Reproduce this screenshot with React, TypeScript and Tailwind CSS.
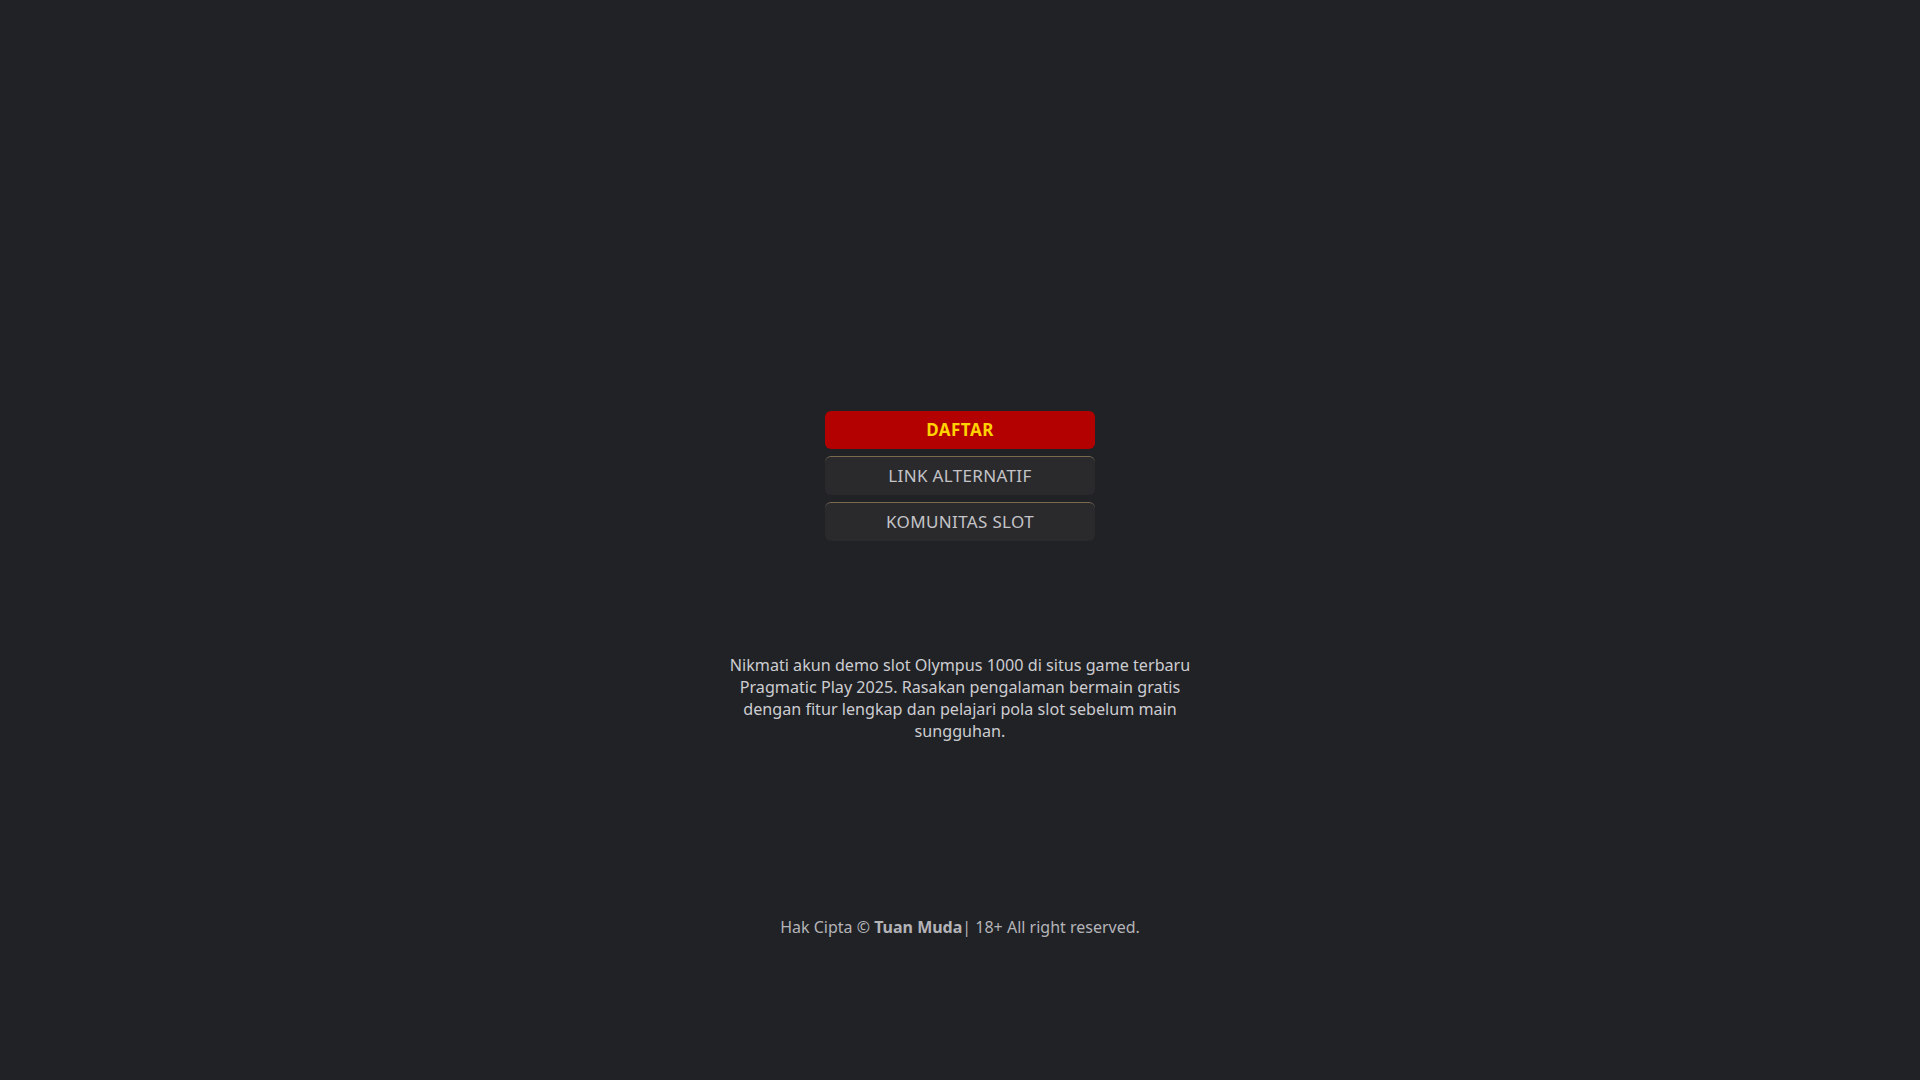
export default function App() {
  return (
    <div
      className="min-h-screen bg-[#212226] flex flex-col items-center pt-[411px]"
      style={{ fontFamily: '"Noto Sans", "Open Sans", sans-serif' }}
    >
      <div className="w-[270px] flex flex-col gap-[7px]">
        <a className="h-[38px] rounded-[6px] bg-[#b30000] text-[#ffd200] font-bold text-[17px] tracking-[0.5px] flex items-center justify-center">
          DAFTAR
        </a>
        <a className="h-[39px] rounded-[6px] bg-[#2a2a2d] border-t border-[#7a6a50] text-[#c4c4c8] text-[17px] tracking-[0.35px] flex items-center justify-center">
          LINK ALTERNATIF
        </a>
        <a className="h-[39px] rounded-[6px] bg-[#2a2a2d] border-t border-[#7a6a50] text-[#c4c4c8] text-[17px] tracking-[0.35px] flex items-center justify-center">
          KOMUNITAS SLOT
        </a>
      </div>

      <p className="mt-[113px] w-[470px] text-center text-[16.15px] leading-[22px] text-[#cdcdd1]">
        Nikmati akun demo slot Olympus 1000 di situs game terbaru Pragmatic Play 2025. Rasakan pengalaman bermain gratis dengan fitur lengkap dan pelajari pola slot sebelum main sungguhan.
      </p>

      <footer className="mt-[174px] text-[16px] leading-[22px] text-[#b4b4b8]">
        Hak Cipta © <strong className="font-bold">Tuan Muda</strong>| 18+ All right reserved.
      </footer>
    </div>
  );
}
